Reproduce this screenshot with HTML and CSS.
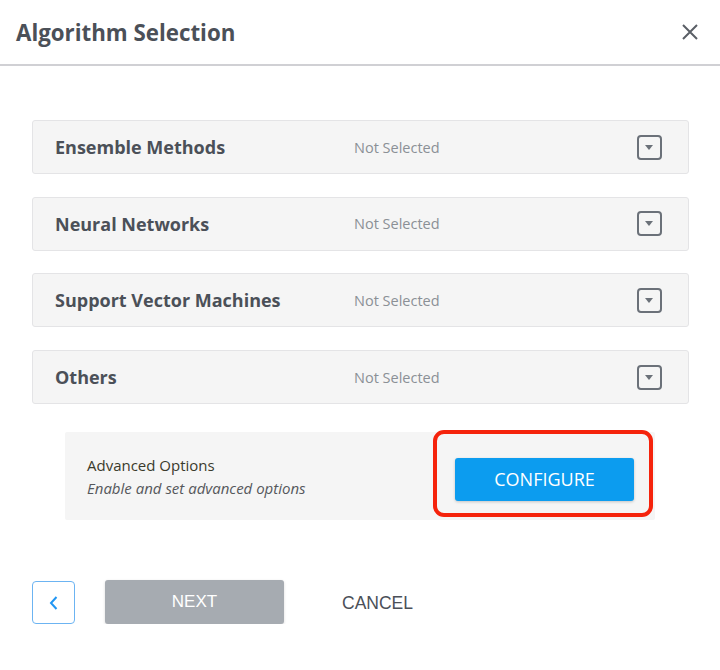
FILE: index.html
```html
<!DOCTYPE html>
<html lang="en">
<head>
    <meta charset="UTF-8">
    <title>Algorithm Selection</title>
    <link rel="stylesheet" href="styles.css">
</head>
<body>

    <header class="modal-header">
        <h1>Algorithm Selection</h1>
        <button class="close-btn" aria-label="Close">
            <svg width="16" height="16" viewBox="0 0 16 16"><path d="M1 1 L15 15 M15 1 L1 15" stroke="#5a5f66" stroke-width="2" fill="none"/></svg>
        </button>
    </header>

    <div class="modal-body">
        <div class="algo-row">
            <span class="algo-name">Ensemble Methods</span>
            <span class="algo-status">Not Selected</span>
            <span class="dropdown-icon"></span>
        </div>
        <div class="algo-row">
            <span class="algo-name">Neural Networks</span>
            <span class="algo-status">Not Selected</span>
            <span class="dropdown-icon"></span>
        </div>
        <div class="algo-row">
            <span class="algo-name">Support Vector Machines</span>
            <span class="algo-status">Not Selected</span>
            <span class="dropdown-icon"></span>
        </div>
        <div class="algo-row">
            <span class="algo-name">Others</span>
            <span class="algo-status">Not Selected</span>
            <span class="dropdown-icon"></span>
        </div>

        <div class="advanced">
            <div class="advanced-text">
                <div class="advanced-title">Advanced Options</div>
                <div class="advanced-desc">Enable and set advanced options</div>
            </div>
            <div class="configure-wrap">
                <button class="configure-btn">CONFIGURE</button>
                <span class="highlight"></span>
            </div>
        </div>
    </div>

    <footer class="modal-footer">
        <button class="back-btn" aria-label="Back">
            <svg width="10" height="16" viewBox="0 0 10 16"><path d="M7.5 2 L2 8 L7.5 14" stroke="#2196f3" stroke-width="2" fill="none"/></svg>
        </button>
        <button class="next-btn">NEXT</button>
        <button class="cancel-btn">CANCEL</button>
    </footer>

</body>
</html>
```

FILE: styles.css
```css
body {
    font-family: 'Open Sans', 'Noto Sans', sans-serif;
    margin: 0;
    background: white;
    color: #4b5058;
}

button {
    font-family: inherit;
    cursor: pointer;
}

.modal-header {
    height: 64px;
    border-bottom: 2px solid #d0d0d4;
    display: flex;
    align-items: center;
    justify-content: space-between;
    padding: 0 22px 0 16px;
}

.modal-header h1 {
    margin: 0;
    font-size: 22.3px;
    font-weight: 700;
    color: #4b5058;
}

.close-btn {
    background: none;
    border: none;
    padding: 0;
    display: flex;
}

.modal-body {
    padding: 54px 31px 0 32px;
}

.algo-row {
    height: 52px;
    background: #f5f5f5;
    border: 1px solid #e4e4e6;
    border-radius: 3px;
    display: flex;
    align-items: center;
    padding: 0 26px 0 22px;
    margin-bottom: 22.7px;
}

.algo-name {
    width: 299px;
    font-size: 18px;
    font-weight: 700;
    color: #4b5058;
}

.algo-status {
    flex: 1;
    font-size: 14.5px;
    color: #8b9096;
}

.dropdown-icon {
    width: 21px;
    height: 21px;
    border: 2px solid #6b7179;
    border-radius: 4px;
    position: relative;
}

.dropdown-icon::after {
    content: '';
    position: absolute;
    left: 6px;
    top: 8px;
    border-left: 4.5px solid transparent;
    border-right: 4.5px solid transparent;
    border-top: 5px solid #6b7179;
}

.advanced {
    margin: 28px 34px 0 33px;
    height: 88px;
    background: #f5f5f5;
    border-radius: 2px;
    display: flex;
    align-items: center;
    justify-content: space-between;
    padding: 0 21px 0 22px;
}

.advanced-title {
    font-size: 15px;
    color: #3a3a2c;
    margin-bottom: 3px;
}

.advanced-desc {
    font-size: 15px;
    font-style: italic;
    color: #55585c;
}

.configure-wrap {
    position: relative;
    margin-top: 6px;
}

.configure-btn {
    width: 179px;
    height: 43px;
    background: #0c9cef;
    color: white;
    border: none;
    border-radius: 3px;
    font-size: 18px;
    box-shadow: 0 1px 3px rgba(0, 0, 0, 0.2);
}

.highlight {
    position: absolute;
    left: -22px;
    right: -19px;
    top: -28px;
    bottom: -16px;
    border: 4px solid #f5230c;
    border-radius: 11px;
}

.modal-footer {
    display: flex;
    align-items: center;
    padding: 59px 32px 0;
}

.back-btn {
    width: 43px;
    height: 43px;
    background: white;
    border: 1px solid #6cb4f2;
    border-radius: 4px;
    display: flex;
    align-items: center;
    justify-content: center;
    margin-right: 30px;
    margin-top: 2px;
}

.next-btn {
    width: 179px;
    height: 44px;
    background: #a6abb1;
    color: white;
    border: none;
    border-radius: 3px;
    font-family: 'Liberation Sans', Arial, sans-serif;
    font-size: 17px;
    box-shadow: 0 1px 3px rgba(0, 0, 0, 0.15);
}

.cancel-btn {
    background: none;
    border: none;
    margin-left: 52px;
    font-family: 'Liberation Sans', Arial, sans-serif;
    font-size: 17.5px;
    color: #4b5058;
    margin-top: 4px;
}
```
